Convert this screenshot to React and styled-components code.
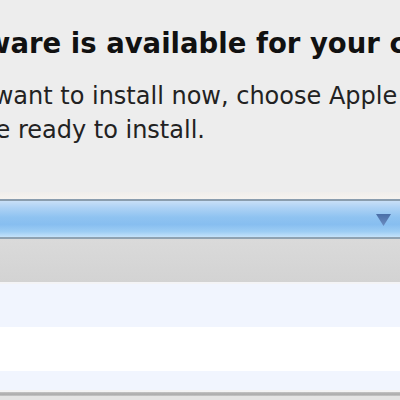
import styled, { createGlobalStyle } from "styled-components";

const GlobalStyle = createGlobalStyle`
  html, body {
    margin: 0;
    padding: 0;
    background: #ededed;
    overflow: hidden;
  }
  body {
    font-family: "DejaVu Sans", "Liberation Sans", sans-serif;
  }
`;

const Window = styled.div`
  width: 400px;
  height: 400px;
  overflow: hidden;
  display: flex;
  flex-direction: column;
  background: #ededed;
`;

// the dialog is cropped on the left, so the message block starts off-screen
const Message = styled.div`
  padding-top: 28px;
  margin-left: -142px;
  white-space: nowrap;
`;

const Title = styled.h1`
  margin: 0 0 21px -10px;
  font-size: 27.5px;
  line-height: 30px;
  font-weight: bold;
  color: #111;
`;

const Body = styled.p`
  margin: 0;
  font-size: 24px;
  line-height: 34px;
  color: #222;
`;

const Line = styled.span`
  display: block;
  margin-left: ${(p) => p.$shift || 0}px;
`;

const Highlight = styled.div`
  margin-top: 45px;
  height: 7px;
  background: linear-gradient(#f0eeeb, #f6f3ef);
`;

const PopupBar = styled.div`
  height: 36px;
  border-top: 2px solid #8a9dae;
  border-bottom: 2px solid #8fa2b2;
  background: linear-gradient(
    #c8dff7 0%,
    #aed2f5 18%,
    #8fc3f1 45%,
    #87bef0 65%,
    #9dcdf4 85%,
    #c4e2fa 100%
  );
  display: flex;
  align-items: center;
  justify-content: flex-end;
  padding-right: 9px;
`;

const Arrow = styled.svg`
  width: 15px;
  height: 12px;
  margin-top: 1px;
`;

const HeaderBand = styled.div`
  height: 43px;
  background: linear-gradient(#dadada, #d3d3d3);
  border-bottom: 2px solid #f4f4f6;
`;

const Row = styled.div`
  height: ${(p) => p.$h}px;
  background: ${(p) => (p.$alt ? "#f1f5fe" : "#ffffff")};
`;

const BottomEdge = styled.div`
  height: 6px;
  background: linear-gradient(#f3f3f4 0%, #f3f3f4 25%, #c4c4c4 35%, #a9a9a9 70%, #c8c8c8 100%);
`;

const Footer = styled.div`
  flex: 1;
  background: #e3e3e3;
`;

export default function App() {
  return (
    <Window>
      <GlobalStyle />
      <Message>
        <Title>New software is available for your computer.</Title>
        <Body>
          <Line $shift={-8}>If you don't want to install now, choose Apple menu &gt; Software Update</Line>
          <Line $shift={5}>when you're ready to install.</Line>
        </Body>
      </Message>
      <Highlight />
      <PopupBar>
        <Arrow viewBox="0 0 15 12">
          <defs>
            <linearGradient id="arrowFill" x1="0" y1="0" x2="0" y2="1">
              <stop offset="0" stopColor="#4a6fa8" />
              <stop offset="1" stopColor="#6b8cc0" />
            </linearGradient>
          </defs>
          <polygon points="0,0 15,0 7.5,12" fill="url(#arrowFill)" />
        </Arrow>
      </PopupBar>
      <HeaderBand />
      <Row $alt $h={43} />
      <Row $h={44} />
      <Row $alt $h={19} />
      <BottomEdge />
      <Footer />
    </Window>
  );
}
